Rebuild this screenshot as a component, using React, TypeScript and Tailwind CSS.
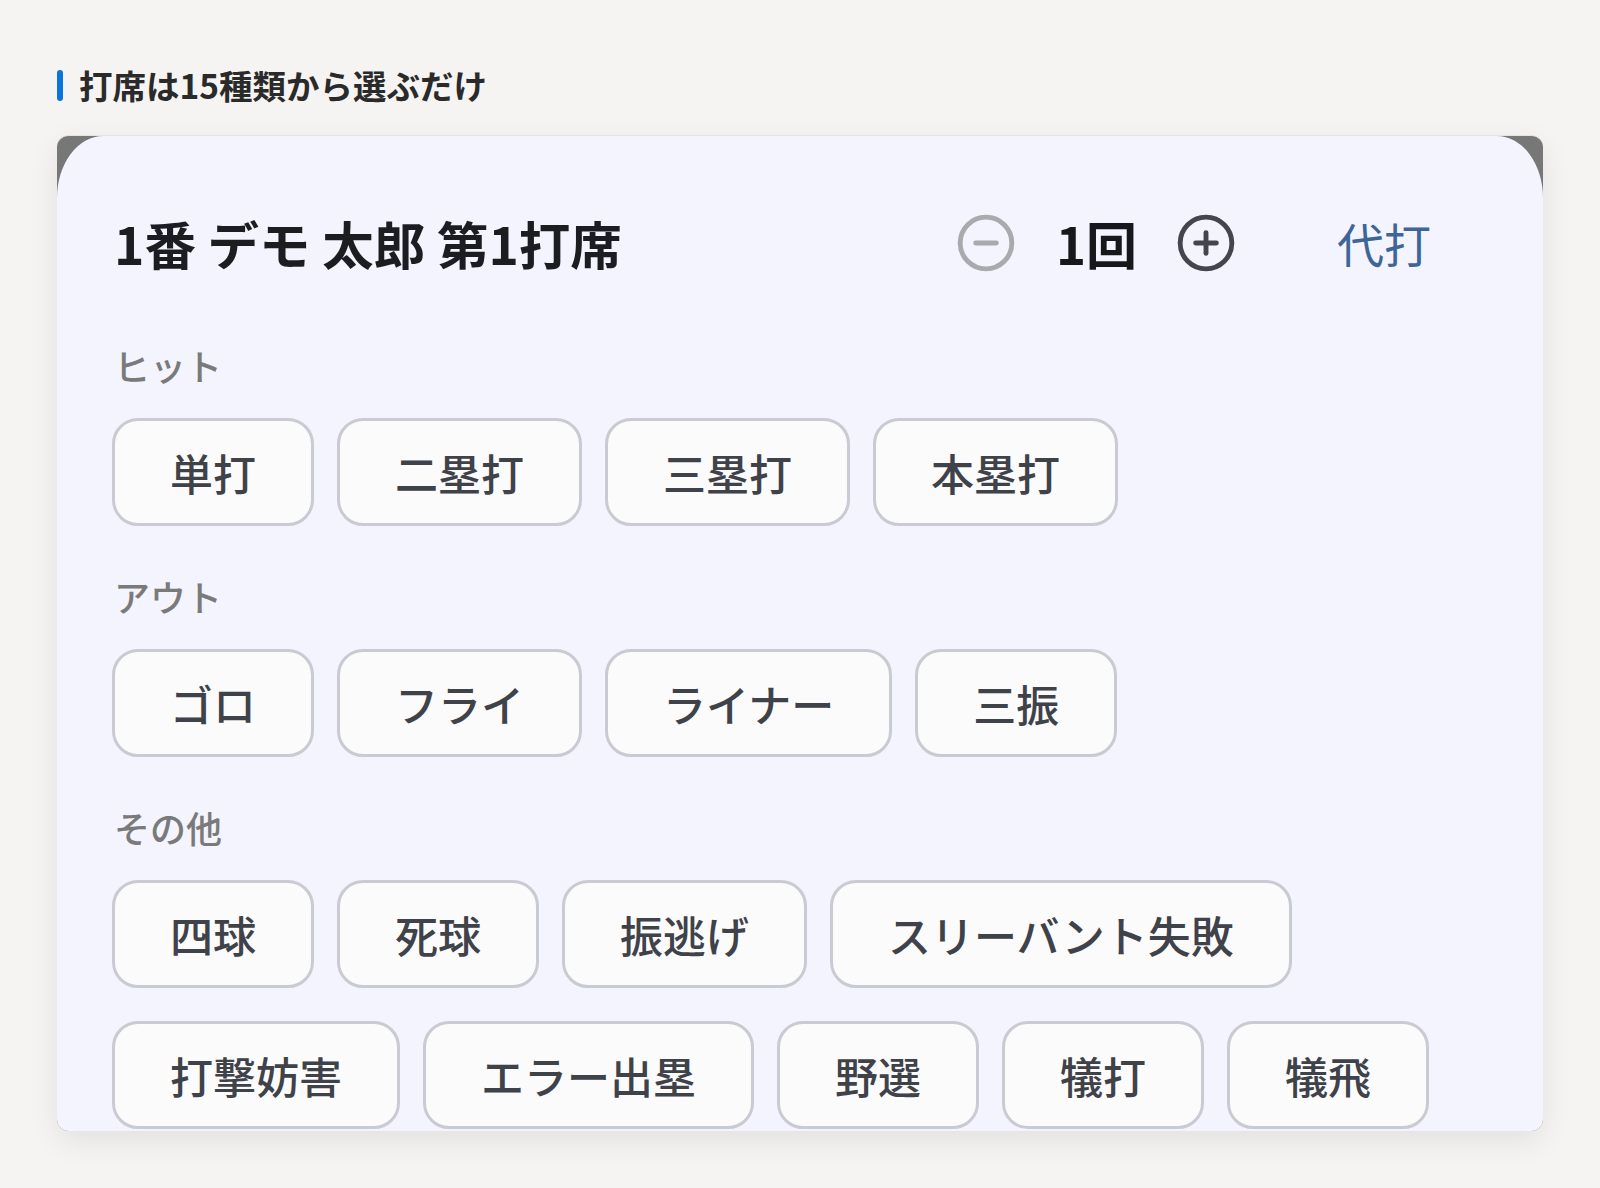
import { CircleMinus, CirclePlus } from 'lucide-react';

const sections = [
    { label: 'ヒット', items: ['単打', '二塁打', '三塁打', '本塁打'] },
    { label: 'アウト', items: ['ゴロ', 'フライ', 'ライナー', '三振'] },
    { label: 'その他', items: ['四球', '死球', '振逃げ', 'スリーバント失敗', '打撃妨害', 'エラー出塁', '野選', '犠打', '犠飛'] },
];

function ResultButton({ text }: { text: string }) {
    return (
        <button className="h-[108px] px-[55px] flex items-center justify-center rounded-[26px] border-[3px] border-[#c9cad2] bg-[#fbfbfc] text-[43px] font-medium text-[#404249] leading-none">
            {text}
        </button>
    );
}

export default function App() {
    return (
        <div
            className="min-h-screen bg-[#f5f4f2] px-[57px] pt-[64px]"
            style={{ fontFamily: '"Noto Sans CJK JP", "Noto Sans", sans-serif' }}
        >
            <div className="flex items-center gap-[16px]">
                <span className="w-[6px] h-[31px] rounded-full bg-[#0a74da]" />
                <h2 className="text-[33.5px] leading-[42px] font-bold text-[#2a2a2a]">打席は15種類から選ぶだけ</h2>
            </div>

            <div className="mt-[29px] h-[996px] rounded-xl bg-[#777777] overflow-hidden shadow-[0_10px_30px_rgba(0,0,0,0.08)] border-t border-[#e4e4e4]">
                <div className="h-full bg-[#f3f4fd] rounded-tl-[46px_62px] rounded-tr-[46px_62px] px-[55px] pt-[75px] overflow-hidden">
                    <div className="flex items-center mb-[63px]">
                        <h3 className="ml-[2px] text-[51.5px] leading-[64px] font-bold text-[#1c1d21]">1番 デモ 太郎 第1打席</h3>
                        <div className="ml-auto flex items-center mr-[57px]">
                            <CircleMinus className="w-[62px] h-[62px] text-[#a9a9ae]" strokeWidth={1.9} />
                            <span className="ml-[39px] text-[51px] leading-[64px] font-bold text-[#17181b]">1回</span>
                            <CirclePlus className="ml-[38px] w-[62px] h-[62px] text-[#45464d]" strokeWidth={1.9} />
                            <span className="ml-[100px] text-[47px] leading-[64px] text-[#3d6598]">代打</span>
                        </div>
                    </div>

                    {sections.map((s, i) => (
                        <div key={s.label} className={i > 0 ? 'mt-[43px]' : ''}>
                            <p className="ml-[2px] text-[36px] leading-[54px] font-medium text-[#7a7a7a] mb-[26px]">{s.label}</p>
                            <div className="flex flex-wrap gap-x-[23px] gap-y-[33px]">
                                {s.items.map((t) => (
                                    <ResultButton key={t} text={t} />
                                ))}
                            </div>
                        </div>
                    ))}
                </div>
            </div>
        </div>
    );
}
